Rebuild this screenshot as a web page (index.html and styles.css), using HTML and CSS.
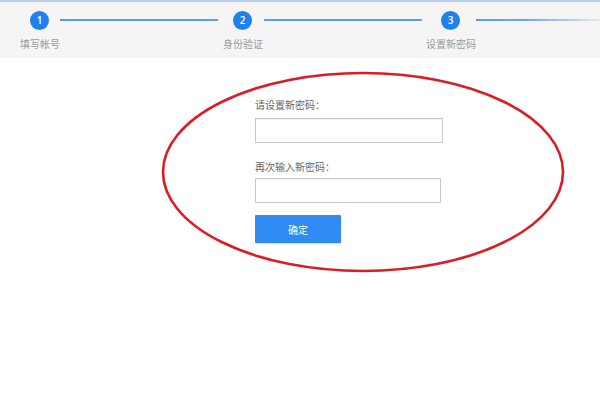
FILE: index.html
```html
<!DOCTYPE html>
<html lang="zh-CN">
<head>
<meta charset="utf-8">
<title>设置新密码</title>
<link rel="stylesheet" href="styles.css">
</head>
<body>
<header class="steps">
  <div class="track">
    <span class="dot dot-1">1</span>
    <span class="bar bar-1"></span>
    <span class="dot dot-2">2</span>
    <span class="bar bar-2"></span>
    <span class="dot dot-3">3</span>
    <span class="bar bar-3"></span>
  </div>
  <div class="labels">
    <span class="lbl lbl-1">填写帐号</span>
    <span class="lbl lbl-2">身份验证</span>
    <span class="lbl lbl-3">设置新密码</span>
  </div>
</header>
<main class="content">
  <form class="form">
    <label class="field-label">请设置新密码：</label>
    <input class="field field-1" type="password">
    <label class="field-label second">再次输入新密码：</label>
    <input class="field field-2" type="password">
    <button class="submit" type="button">确定</button>
  </form>
  <svg class="mark" width="600" height="400" viewBox="0 0 600 400">
    <ellipse cx="363" cy="172" rx="200" ry="99" fill="none" stroke="#db1c25" stroke-width="2.6"/>
  </svg>
</main>
</body>
</html>
```
FILE: styles.css
```css
* { box-sizing: border-box; }
html, body {
  margin: 0;
  padding: 0;
  background: #fff;
  font-family: "Noto Sans CJK SC", "Noto Sans", sans-serif;
  width: 600px;
  height: 400px;
  overflow: hidden;
}
.steps {
  height: 58px;
  background: #f5f5f5;
  border-top: 2px solid #b9cff0;
  padding-top: 9px;
}
.track {
  display: flex;
  align-items: center;
  height: 18px;
}
.dot {
  flex: none;
  width: 19px;
  height: 19px;
  border-radius: 50%;
  background: #1f80f0;
  color: #fff;
  font-size: 10px;
  line-height: 19px;
  text-align: center;
  font-family: "Open Sans", sans-serif;
  font-weight: 600;
}
.dot-1 { margin-left: 30px; }
.dot-2 { margin-left: 15px; }
.dot-3 { margin-left: 19px; }
.bar {
  height: 2px;
  background: #5c9be6;
}
.bar-1 { margin-left: 11px; width: 158px; }
.bar-2 { margin-left: 12px; width: 158px; }
.bar-3 {
  margin-left: 16px;
  flex: 1;
  background: linear-gradient(to right, #5c9be6 0%, #6fa6ea 40%, #e3ebf5 100%);
}
.labels {
  display: flex;
  margin-top: 8px;
}
.lbl {
  flex: none;
  width: 80px;
  text-align: center;
  font-size: 10px;
  line-height: 14px;
  color: #9a9a9a;
}
.lbl-1 { margin-left: 0; }
.lbl-2 { margin-left: 123px; }
.lbl-3 { margin-left: 128px; }

.content {
  position: relative;
  height: 342px;
}
.form {
  display: flex;
  flex-direction: column;
  align-items: flex-start;
  padding: 40px 0 0 255px;
  margin: 0;
}
.field-label {
  font-size: 10px;
  line-height: 14px;
  color: #666;
  height: 14px;
}
.field-label.second { margin-top: 17px; }
.field {
  margin-top: 6px;
  height: 25px;
  border: 1px solid #c9c9c9;
  box-shadow: inset 0 1px 1px rgba(0,0,0,0.05);
  background: #fff;
  padding: 0 6px;
  outline: none;
}
.field-1 { width: 188px; }
.field-2 { width: 186px; margin-top: 4px; }
.submit {
  margin-top: 12px;
  width: 86px;
  height: 28px;
  border: none;
  border-radius: 1px;
  background: #2f8bf2;
  color: #fff;
  font-family: "Noto Sans CJK SC", sans-serif;
  font-size: 10px;
  padding: 0;
  box-shadow: 0 1px 1px rgba(0,0,0,0.15);
}
.mark {
  position: absolute;
  left: 0;
  top: -58px;
  pointer-events: none;
}
```
